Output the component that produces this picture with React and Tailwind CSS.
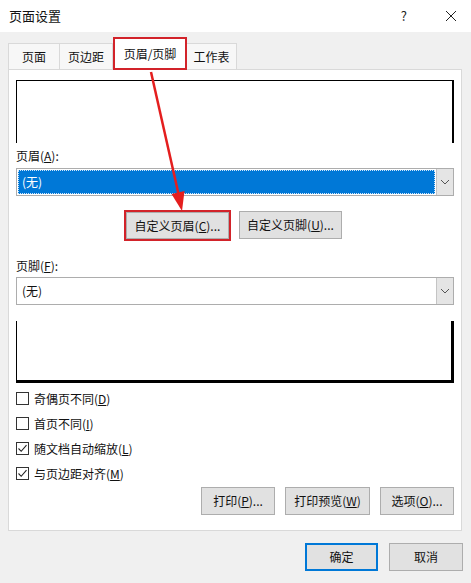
import React from "react";

const font = { fontFamily: '"Noto Sans CJK SC", "Noto Sans", sans-serif' };

function Btn({ children, className = "" }) {
  return (
    <div
      className={`flex items-center justify-center bg-[#e1e1e1] border border-[#adadad] text-[12px] text-[#111] ${className}`}
    >
      {children}
    </div>
  );
}

function Chevron() {
  return (
    <svg width="10" height="6" viewBox="0 0 10 6">
      <path d="M1 1 L5 5 L9 1" fill="none" stroke="#555" strokeWidth="1" />
    </svg>
  );
}

function Check({ checked, children }) {
  return (
    <div className="flex items-center h-[25px]">
      <div className="w-[13px] h-[13px] border border-[#333] bg-white flex items-center justify-center">
        {checked && (
          <svg width="11" height="11" viewBox="0 0 11 11">
            <path d="M1.5 5.5 L4.2 8.3 L9.5 2.2" fill="none" stroke="#222" strokeWidth="1.1" />
          </svg>
        )}
      </div>
      <span className="ml-[5px] text-[12px] text-[#111]">{children}</span>
    </div>
  );
}

export default function App() {
  return (
    <div className="relative w-[471px] h-[583px] bg-[#f0f0f0] overflow-hidden" style={font}>
      {/* Title bar */}
      <div className="h-[32px] bg-white flex items-center pl-[9px] pr-[14px]">
        <span className="text-[13px] text-[#111]">页面设置</span>
        <div className="flex-1" />
        <span className="text-[13px] text-[#222] mr-[38px]">?</span>
        <svg width="12" height="12" viewBox="0 0 12 12">
          <path d="M1 1 L11 11 M11 1 L1 11" stroke="#222" strokeWidth="1" />
        </svg>
      </div>

      {/* Tabs */}
      <div className="pl-[8px] pt-[5px] flex items-end h-[37px]">
        <div className="w-[52px] h-[26px] bg-[#f7f7f7] border border-[#d9d9d9] border-b-0 flex items-center justify-center text-[12px] text-[#111]">
          页面
        </div>
        <div className="w-[53px] h-[26px] bg-[#f7f7f7] border border-[#d9d9d9] border-l-0 border-b-0 flex items-center justify-center text-[12px] text-[#111]">
          页边距
        </div>
        <div className="relative z-10 w-[74px] h-[33px] -mb-[1px] bg-white border-2 border-[#d2232a] flex items-center justify-center text-[12px] text-[#111]">
          页眉/页脚
        </div>
        <div className="w-[50px] h-[26px] bg-[#f7f7f7] border border-[#d9d9d9] border-l-0 border-b-0 flex items-center justify-center text-[12px] text-[#111]">
          工作表
        </div>
      </div>

      {/* Panel */}
      <div className="ml-[8px] w-[454px] h-[462px] bg-white border border-[#d9d9d9] pl-[7px] pr-[7px] pt-[10px]">
        {/* header preview */}
        <div className="h-[63px] border-t border-l border-black border-r-2" />
        <div className="mt-[4px] h-[18px] flex items-center text-[12px] text-[#111]">
          页眉(<u>A</u>):
        </div>
        <div className="mt-[3px] h-[28px] flex border border-[#adadad]">
          <div className="flex-1 m-[1px] bg-[#0078d7] border border-dotted border-[#cfe6fb] flex items-center pl-[3px] text-[12px] text-white">
            (无)
          </div>
          <div className="w-[17px] bg-[#e5e5e5] border-l border-[#c4c4c4] flex items-center justify-center">
            <Chevron />
          </div>
        </div>

        <div className="mt-[14px] flex">
          <div className="ml-[108px] w-[107px] h-[31px] border-2 border-[#d2232a] flex">
            <div className="flex-1 bg-[#e1e1e1] border border-[#adadad] flex items-center justify-center text-[12px] text-[#111]">
              自定义页眉(<u>C</u>)...
            </div>
          </div>
          <Btn className="ml-[8px] mt-[1px] w-[103px] h-[28px]">
            自定义页脚(<u>U</u>)...
          </Btn>
        </div>

        <div className="mt-[16px] h-[18px] flex items-center text-[12px] text-[#111]">
          页脚(<u>F</u>):
        </div>
        <div className="mt-[2px] h-[28px] flex border border-[#adadad]">
          <div className="flex-1 flex items-center pl-[5px] text-[12px] text-[#111]">(无)</div>
          <div className="w-[17px] bg-[#e5e5e5] border-l border-[#c4c4c4] flex items-center justify-center">
            <Chevron />
          </div>
        </div>

        {/* footer preview */}
        <div className="mt-[16px] h-[62px] border-l border-black border-r-[3px] border-b-[3px]" />

        <div className="mt-[3px] flex flex-col">
          <Check checked={false}>
            奇偶页不同(<u>D</u>)
          </Check>
          <Check checked={false}>
            首页不同(<u>I</u>)
          </Check>
          <Check checked={true}>
            随文档自动缩放(<u>L</u>)
          </Check>
          <Check checked={true}>
            与页边距对齐(<u>M</u>)
          </Check>
        </div>

        <div className="mt-[1px] flex justify-end gap-[10px]">
          <Btn className="w-[74px] h-[28px]">
            打印(<u>P</u>)...
          </Btn>
          <Btn className="w-[85px] h-[28px]">
            打印预览(<u>W</u>)
          </Btn>
          <Btn className="w-[74px] h-[28px]">
            选项(<u>O</u>)...
          </Btn>
        </div>
      </div>

      {/* bottom buttons */}
      <div className="mt-[12px] flex justify-end pr-[8px] gap-[11px]">
        <div className="w-[73px] h-[28px] bg-[#e1e1e1] border-2 border-[#0078d7] flex items-center justify-center text-[12px] text-[#111]">
          确定
        </div>
        <Btn className="w-[74px] h-[28px]">取消</Btn>
      </div>

      {/* red arrow overlay */}
      <svg className="absolute left-0 top-0 pointer-events-none" width="471" height="583">
        <line x1="151" y1="72" x2="178.5" y2="194" stroke="#e41e1e" strokeWidth="2.5" />
        <polygon points="184.5,191 171.5,194 182,211" fill="#e41e1e" />
      </svg>
    </div>
  );
}
